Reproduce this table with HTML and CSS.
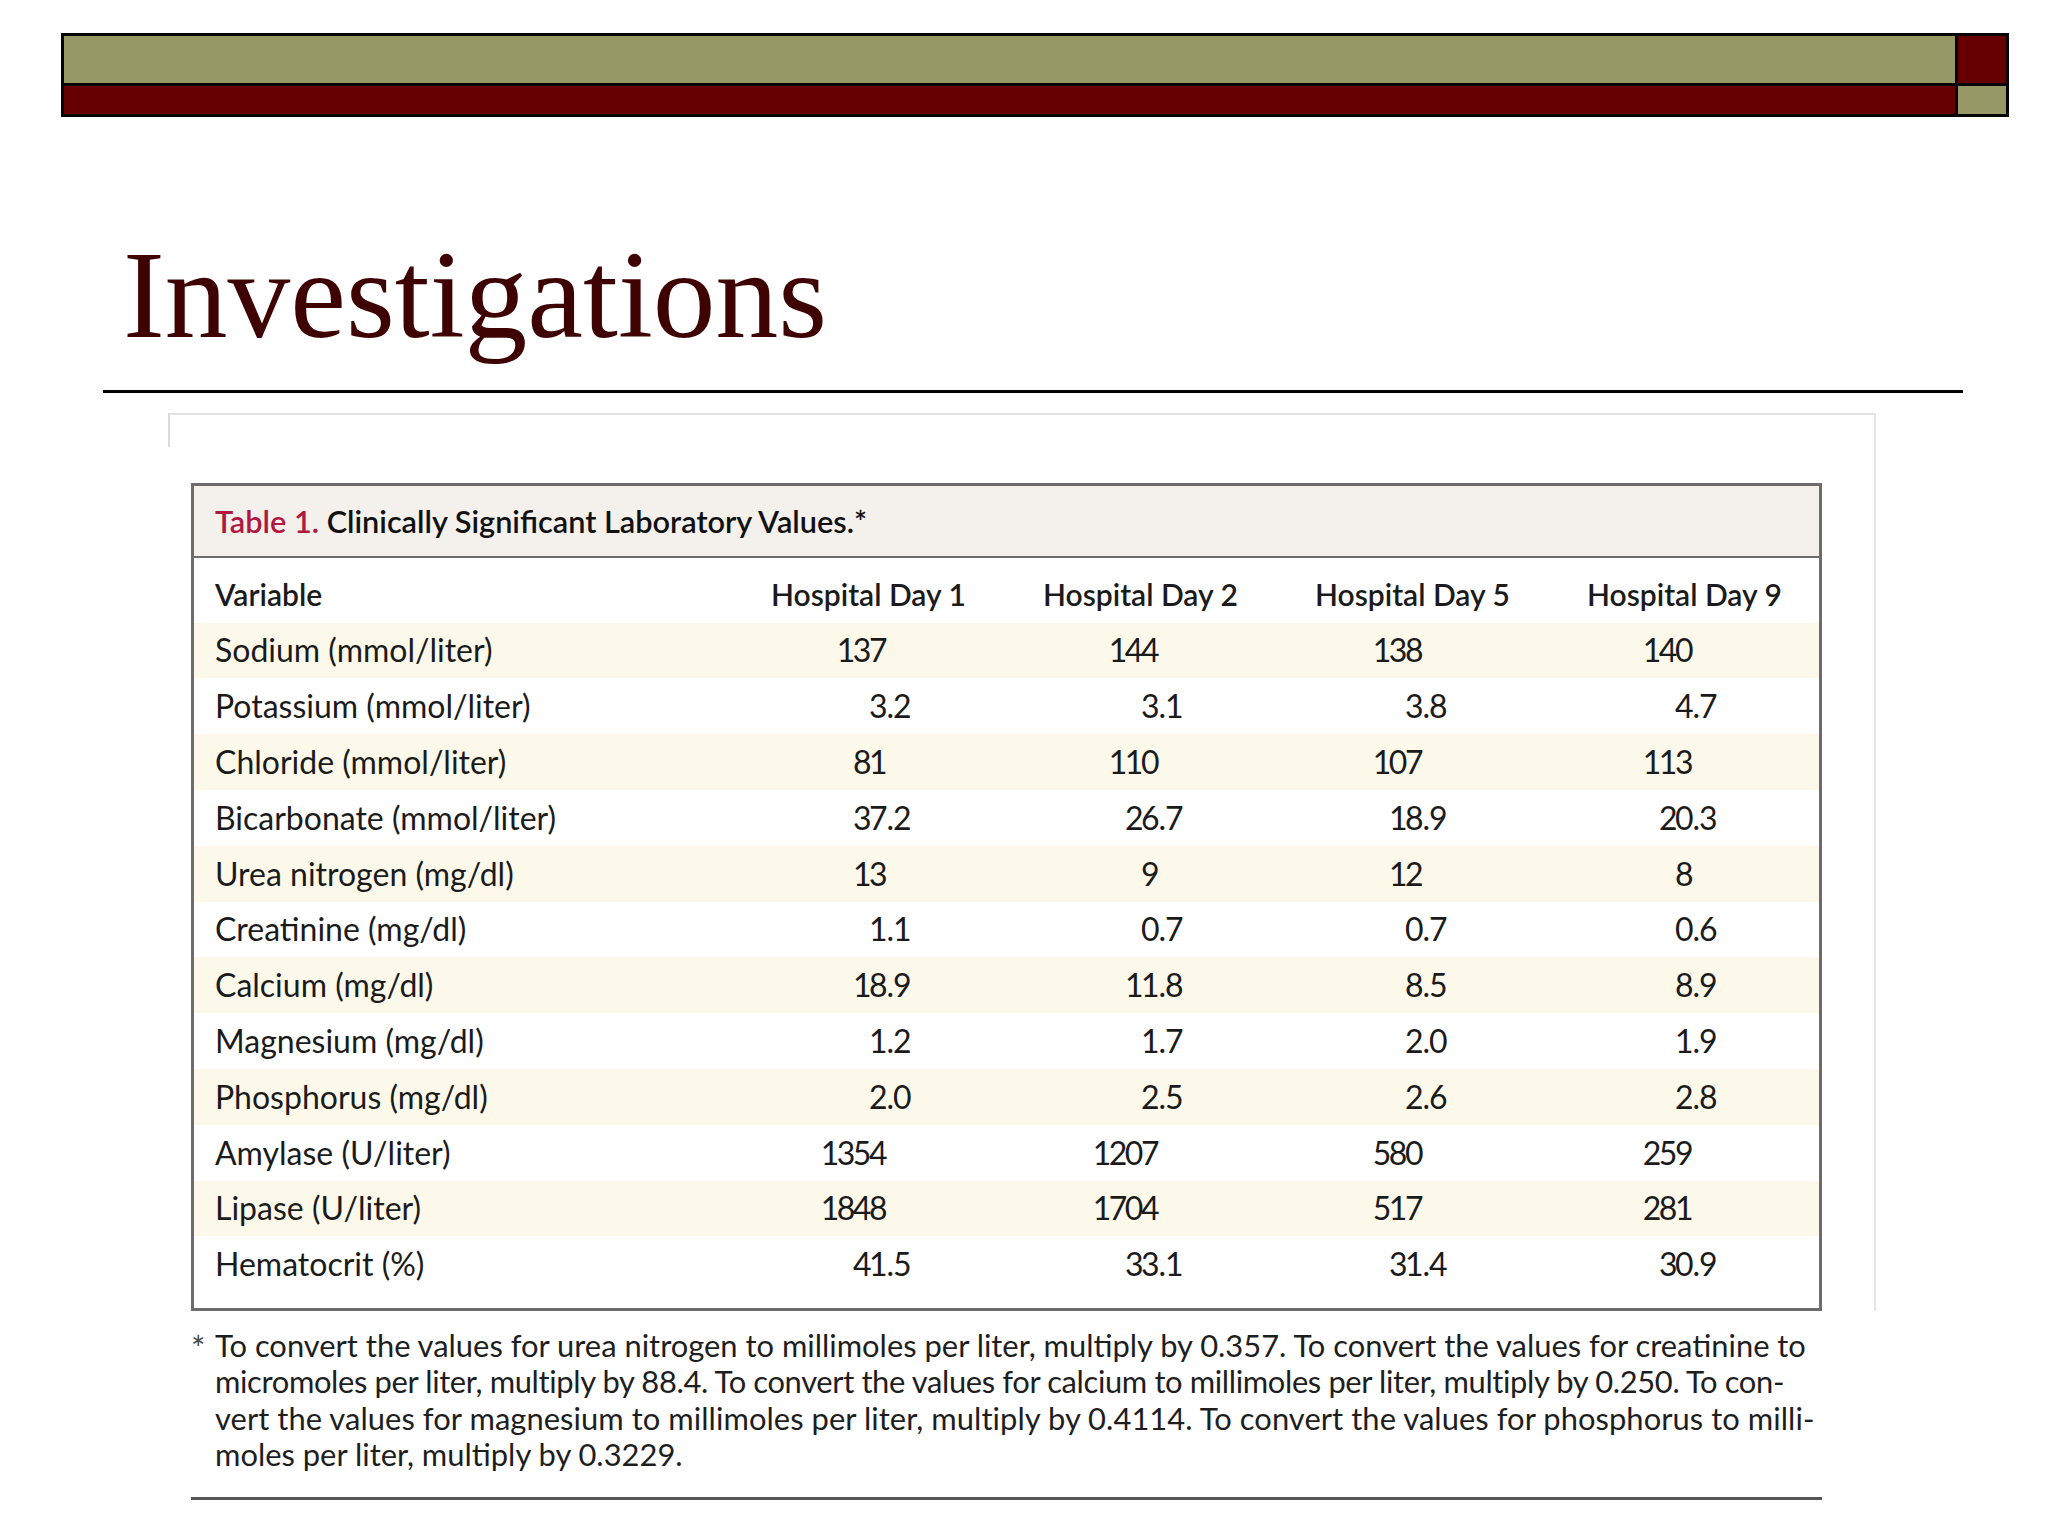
FILE: index.html
```html
<!DOCTYPE html>
<html lang="en">
<head>
<meta charset="utf-8">
<title>Investigations</title>
<link rel="stylesheet" href="styles.css">
</head>
<body>
<main class="slide">
  <div class="topbar">
    <div class="cell green"></div>
    <div class="cell red"></div>
    <div class="cell red"></div>
    <div class="cell green"></div>
  </div>

  <h1 class="title">Investigations</h1>
  <div class="rule"></div>

  <div class="frame">
    <div class="tbl">
      <div class="caption"><span class="label">Table 1.</span>&nbsp;Clinically Significant Laboratory Values.*</div>
      <div class="row head">
        <div>Variable</div>
        <div>Hospital Day 1</div>
        <div>Hospital Day 2</div>
        <div>Hospital Day 5</div>
        <div>Hospital Day 9</div>
      </div>
      <div class="row">
        <div>Sodium (mmol/liter)</div>
        <div class="v"><span class="i">137</span></div>
        <div class="v"><span class="i">144</span></div>
        <div class="v"><span class="i">138</span></div>
        <div class="v"><span class="i">140</span></div>
      </div>
      <div class="row">
        <div>Potassium (mmol/liter)</div>
        <div class="v"><span class="i">3</span><span class="f">.2</span></div>
        <div class="v"><span class="i">3</span><span class="f">.1</span></div>
        <div class="v"><span class="i">3</span><span class="f">.8</span></div>
        <div class="v"><span class="i">4</span><span class="f">.7</span></div>
      </div>
      <div class="row">
        <div>Chloride (mmol/liter)</div>
        <div class="v"><span class="i">81</span></div>
        <div class="v"><span class="i">110</span></div>
        <div class="v"><span class="i">107</span></div>
        <div class="v"><span class="i">113</span></div>
      </div>
      <div class="row">
        <div>Bicarbonate (mmol/liter)</div>
        <div class="v"><span class="i">37</span><span class="f">.2</span></div>
        <div class="v"><span class="i">26</span><span class="f">.7</span></div>
        <div class="v"><span class="i">18</span><span class="f">.9</span></div>
        <div class="v"><span class="i">20</span><span class="f">.3</span></div>
      </div>
      <div class="row">
        <div>Urea nitrogen (mg/dl)</div>
        <div class="v"><span class="i">13</span></div>
        <div class="v"><span class="i">9</span></div>
        <div class="v"><span class="i">12</span></div>
        <div class="v"><span class="i">8</span></div>
      </div>
      <div class="row">
        <div>Creatinine (mg/dl)</div>
        <div class="v"><span class="i">1</span><span class="f">.1</span></div>
        <div class="v"><span class="i">0</span><span class="f">.7</span></div>
        <div class="v"><span class="i">0</span><span class="f">.7</span></div>
        <div class="v"><span class="i">0</span><span class="f">.6</span></div>
      </div>
      <div class="row">
        <div>Calcium (mg/dl)</div>
        <div class="v"><span class="i">18</span><span class="f">.9</span></div>
        <div class="v"><span class="i">11</span><span class="f">.8</span></div>
        <div class="v"><span class="i">8</span><span class="f">.5</span></div>
        <div class="v"><span class="i">8</span><span class="f">.9</span></div>
      </div>
      <div class="row">
        <div>Magnesium (mg/dl)</div>
        <div class="v"><span class="i">1</span><span class="f">.2</span></div>
        <div class="v"><span class="i">1</span><span class="f">.7</span></div>
        <div class="v"><span class="i">2</span><span class="f">.0</span></div>
        <div class="v"><span class="i">1</span><span class="f">.9</span></div>
      </div>
      <div class="row">
        <div>Phosphorus (mg/dl)</div>
        <div class="v"><span class="i">2</span><span class="f">.0</span></div>
        <div class="v"><span class="i">2</span><span class="f">.5</span></div>
        <div class="v"><span class="i">2</span><span class="f">.6</span></div>
        <div class="v"><span class="i">2</span><span class="f">.8</span></div>
      </div>
      <div class="row">
        <div>Amylase (U/liter)</div>
        <div class="v"><span class="i">1354</span></div>
        <div class="v"><span class="i">1207</span></div>
        <div class="v"><span class="i">580</span></div>
        <div class="v"><span class="i">259</span></div>
      </div>
      <div class="row">
        <div>Lipase (U/liter)</div>
        <div class="v"><span class="i">1848</span></div>
        <div class="v"><span class="i">1704</span></div>
        <div class="v"><span class="i">517</span></div>
        <div class="v"><span class="i">281</span></div>
      </div>
      <div class="row">
        <div>Hematocrit (%)</div>
        <div class="v"><span class="i">41</span><span class="f">.5</span></div>
        <div class="v"><span class="i">33</span><span class="f">.1</span></div>
        <div class="v"><span class="i">31</span><span class="f">.4</span></div>
        <div class="v"><span class="i">30</span><span class="f">.9</span></div>
      </div>
    </div>
  </div>

  <div class="footnote">
    <span class="star">*</span>
    <p class="note"><span class="line">To convert the values for urea nitrogen to millimoles per liter, multiply by 0.357. To convert the values for creatinine to</span><span class="line tight">micromoles per liter, multiply by 88.4. To convert the values for calcium to millimoles per liter, multiply by 0.250. To con-</span><span class="line loose">vert the values for magnesium to millimoles per liter, multiply by 0.4114. To convert the values for phosphorus to milli-</span><span class="line">moles per liter, multiply by 0.3229.</span></p>
  </div>
  <div class="endrule"></div>
</main>
</body>
</html>
```

FILE: styles.css
```css
html, body {
  margin: 0;
  padding: 0;
  background: #ffffff;
}

.slide {
  width: 2048px;
  height: 1536px;
  overflow: hidden;
  padding-top: 33px;
  box-sizing: border-box;
}

/* top decorative bar */
.topbar {
  margin-left: 61px;
  width: 1948px;
  height: 84px;
  box-sizing: border-box;
  display: grid;
  grid-template-columns: 1fr 48px;
  grid-template-rows: 47px 28px;
  gap: 3px;
  padding: 3px;
  background: #050505;
}
.cell.green { background: #969866; }
.cell.red { background: #660000; }

/* title */
.title {
  margin: 116px 0 0 123px;
  font-family: "Liberation Serif", "Times New Roman", serif;
  font-weight: normal;
  font-size: 125.5px;
  line-height: 124px;
  color: #3f0202;
}

.rule {
  margin: 33px 0 0 103px;
  width: 1860px;
  height: 3px;
  background: #000;
}

/* embedded figure frame */
.frame {
  position: relative;
  margin: 20px 0 0 168px;
  width: 1708px;
  box-sizing: border-box;
  border-top: 2px solid #e2e2e2;
  border-right: 2px solid #e6e6e6;
  padding: 68px 0 0 23px;
}
.frame::before {
  content: "";
  position: absolute;
  left: 0;
  top: -2px;
  width: 2px;
  height: 34px;
  background: #dcdcdc;
}

/* table */
.tbl {
  width: 1631px;
  box-sizing: border-box;
  border: 3px solid #6c6c6c;
  font-family: Lato, "Open Sans", sans-serif;
  color: #1b1b1b;
}

.caption {
  height: 72px;
  box-sizing: border-box;
  background: #f4f1ec;
  border-bottom: 2px solid #6c6c6c;
  padding-left: 21px;
  display: flex;
  align-items: center;
  font-size: 30.7px;
  font-weight: 600;
  color: #111;
}
.caption .label { color: #b0183f; }

.row {
  display: grid;
  grid-template-columns: 556px 272px 272px 272px 1fr;
  align-items: center;
  padding-left: 21px;
  height: 55.8px;
  font-size: 32px;
  line-height: 40px;
}
.row.head {
  height: auto;
  padding-top: 16px;
  padding-bottom: 8.6px;
  font-size: 30px;
  font-weight: 600;
}
.row:nth-child(odd):not(.head) { background: #fcf9ea; }
.tbl .row:last-child { margin-bottom: 16px; }

.v { display: flex; }
.v .i { text-align: right; letter-spacing: -2.5px; }
.v .f { letter-spacing: -1px; padding-left: 1.5px; }
.row > .v:nth-child(2) .i { width: 114px; }
.row > .v:nth-child(3) .i { width: 114px; }
.row > .v:nth-child(4) .i { width: 106px; }
.row > .v:nth-child(5) .i { width: 104px; }

/* footnote */
.footnote {
  display: flex;
  margin: 17px 0 0 191px;
  font-family: Lato, "Open Sans", sans-serif;
  font-size: 30.9px;
  line-height: 36.2px;
  color: #1e1e1e;
}
.star {
  width: 24px;
  flex: none;
  font-size: 34px;
  line-height: 40px;
  color: #4a4a4a;
}
.note {
  margin: 0;
  white-space: nowrap;
}
.line { display: block; }
.line.tight { letter-spacing: -0.36px; }
.line.loose { letter-spacing: 0.06px; }

.endrule {
  margin: 24px 0 0 191px;
  width: 1631px;
  height: 3px;
  background: #565656;
}
```
